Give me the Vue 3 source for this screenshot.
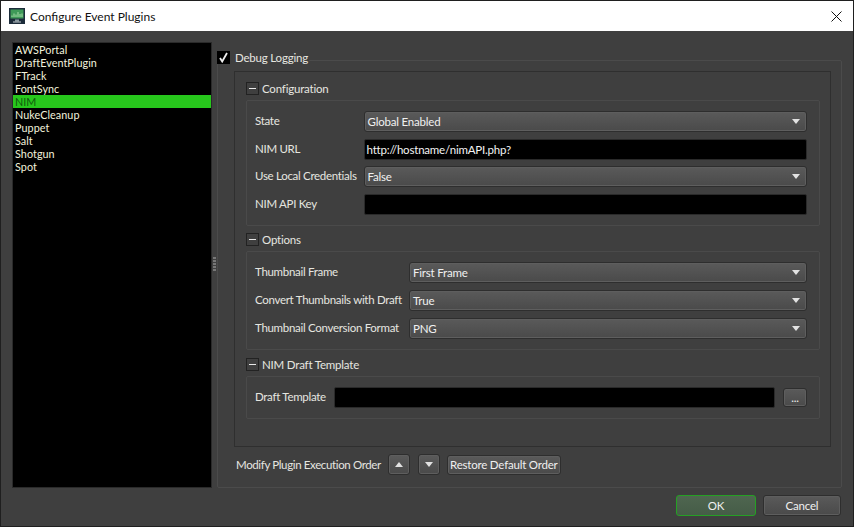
<template>
  <div class="window">
    <header class="titlebar">
      <svg class="app-icon" width="16" height="16" viewBox="0 0 16 16">
        <rect x="0" y="0" width="16" height="16" fill="#1c2c3a" />
        <rect x="1.5" y="1.5" width="13" height="9" fill="#3f9a58" />
        <path d="M3 9V7.5M5 9V5.5M7 9V6.5M9 9V4M11 9V6M13 9V5.5" stroke="#a8dca8" stroke-width="1" />
        <rect x="6" y="11.5" width="4" height="2" fill="#8a9aa0" />
        <rect x="4" y="13.5" width="8" height="1" fill="#c4ccd0" />
      </svg>
      <span class="title">Configure Event Plugins</span>
      <svg class="close" width="11" height="11" viewBox="0 0 11 11">
        <path d="M0.5 0.5L10.5 10.5M10.5 0.5L0.5 10.5" stroke="#111" stroke-width="1" fill="none" />
      </svg>
    </header>

    <main class="content">
      <ul class="plugin-list">
        <li
          v-for="plugin in plugins"
          :key="plugin"
          :class="{ selected: plugin === selected }"
          @click="selected = plugin"
        >
          {{ plugin }}
        </li>
      </ul>

      <div class="splitter"><span v-for="n in 5" :key="n"></span></div>

      <section class="settings">
        <div class="debug-head">
          <span class="checkbox">
            <svg width="11" height="11" viewBox="0 0 11 11">
              <path d="M2 6L4.2 9.5L9 1" stroke="#eee" stroke-width="1.8" fill="none" />
            </svg>
          </span>
          <span class="debug-label">Debug Logging</span>
        </div>

        <div class="outer-group">
          <div class="inner-group">
            <div v-for="group in groups" :key="group.name" class="section">
              <div class="section-head">
                <span class="minus"></span>
                <span>{{ group.name }}</span>
              </div>
              <div class="fields">
                <template v-for="field in group.fields" :key="field.label">
                  <label>{{ field.label }}</label>
                  <div v-if="field.type === 'combo'" class="combo">
                    <span>{{ field.value }}</span>
                    <i class="arrow-down"></i>
                  </div>
                  <div v-else-if="field.type === 'browse'" class="browse-row">
                    <div class="input"></div>
                    <button class="btn browse">...</button>
                  </div>
                  <div v-else class="input">{{ field.value }}</div>
                </template>
              </div>
            </div>
          </div>

          <div class="order-row">
            <span class="order-label">Modify Plugin Execution Order</span>
            <button class="btn square"><i class="arrow-up"></i></button>
            <button class="btn square"><i class="arrow-down"></i></button>
            <button class="btn restore">Restore Default Order</button>
          </div>
        </div>
      </section>
    </main>

    <footer class="footer">
      <button class="btn ok">OK</button>
      <button class="btn cancel">Cancel</button>
    </footer>
  </div>
</template>

<script setup>
import { ref } from "vue";

const plugins = [
  "AWSPortal",
  "DraftEventPlugin",
  "FTrack",
  "FontSync",
  "NIM",
  "NukeCleanup",
  "Puppet",
  "Salt",
  "Shotgun",
  "Spot",
];

const selected = ref("NIM");

const groups = [
  {
    name: "Configuration",
    fields: [
      { label: "State", type: "combo", value: "Global Enabled" },
      { label: "NIM URL", type: "input", value: "http://hostname/nimAPI.php?" },
      { label: "Use Local Credentials", type: "combo", value: "False" },
      { label: "NIM API Key", type: "input", value: "" },
    ],
  },
  {
    name: "Options",
    fields: [
      { label: "Thumbnail Frame", type: "combo", value: "First Frame" },
      { label: "Convert Thumbnails with Draft", type: "combo", value: "True" },
      { label: "Thumbnail Conversion Format", type: "combo", value: "PNG" },
    ],
  },
  {
    name: "NIM Draft Template",
    fields: [{ label: "Draft Template", type: "browse", value: "" }],
  },
];
</script>

<style>
html,
body {
  margin: 0;
  background: #3e3e3e;
}
</style>

<style scoped>
.window {
  width: 854px;
  height: 527px;
  box-sizing: border-box;
  display: flex;
  flex-direction: column;
  background: #3f3f3f;
  border: 1px solid #1f1f1f;
  font-family: Lato, "Open Sans", sans-serif;
  font-size: 11.5px;
  letter-spacing: -0.3px;
  color: #e6e6e0;
}

.titlebar {
  height: 30px;
  flex: none;
  display: flex;
  align-items: center;
  background: #fff;
  color: #111;
  padding: 0 11px 0 8px;
}

.app-icon {
  margin-right: 5px;
}

.title {
  flex: 1;
  font-size: 12px;
  letter-spacing: 0;
}

.content {
  flex: 1;
  display: flex;
  padding: 11px 11px 0 11px;
  min-height: 0;
}

.plugin-list {
  width: 198px;
  height: 444px;
  flex: none;
  margin: 0;
  padding: 0;
  list-style: none;
  background: #000;
  border: 1px solid #2a2a2a;
  color: #f2f2dc;
  font-size: 10.8px;
  letter-spacing: 0.05px;
  line-height: 13px;
}

.plugin-list li {
  height: 13px;
  padding-left: 2px;
}

.plugin-list li.selected {
  background: #27c71c;
  color: #0f5a0c;
}

.splitter {
  width: 5px;
  flex: none;
  display: flex;
  flex-direction: column;
  align-items: center;
  justify-content: center;
  gap: 1px;
  height: 444px;
}

.splitter span {
  width: 3px;
  height: 2px;
  background: #777;
}

.settings {
  flex: 1;
  min-width: 0;
  display: flex;
  flex-direction: column;
  height: 446px;
}

.debug-head {
  height: 14px;
  margin: 8px 0 -4px 0;
  display: flex;
  align-items: center;
  position: relative;
  z-index: 1;
}

.checkbox {
  width: 13px;
  height: 13px;
  background: #000;
  display: flex;
  align-items: center;
  justify-content: center;
}

.debug-label {
  background: #3f3f3f;
  padding: 0 1px 0 5px;
  letter-spacing: -0.2px;
}

.outer-group {
  flex: 1;
  border: 1px solid #4b4b4b;
  border-radius: 2px;
  padding: 10px 10px 0 16px;
  display: flex;
  flex-direction: column;
}

.inner-group {
  height: 376px;
  box-sizing: border-box;
  border: 1px solid #2f2f2f;
  padding: 10px 10px 0 11px;
  display: flex;
  flex-direction: column;
  gap: 7px;
}

.section:last-child {
  margin-top: 1px;
}

.section:last-child .fields {
  column-gap: 8px;
}

.section-head {
  height: 13px;
  display: flex;
  align-items: center;
  gap: 3px;
  margin-bottom: 5px;
  letter-spacing: -0.2px;
}

.minus {
  width: 11px;
  height: 11px;
  border: 1px solid #222;
  position: relative;
  flex: none;
}

.minus::after {
  content: "";
  position: absolute;
  left: 2px;
  right: 2px;
  top: 5px;
  height: 1px;
  background: #e8e8e8;
}

.fields {
  display: grid;
  grid-template-columns: auto 1fr;
  column-gap: 7px;
  row-gap: 7px;
  align-items: center;
  border: 1px solid #4a4a4a;
  border-radius: 2px;
  padding: 10px 12px 10px 8px;
}

.section:first-child .fields {
  row-gap: 6.5px;
}

.fields label {
  margin-top: -2px;
}

.combo {
  height: 21px;
  box-sizing: border-box;
  display: flex;
  align-items: center;
  justify-content: space-between;
  padding: 0 6px 0 3px;
  border: 1px solid #2e2e2e;
  border-radius: 3px;
  background: linear-gradient(#5a5a5a, #4a4a4a);
  box-shadow: inset 0 0 0 1px #5e5e5e;
  color: #f0f0f0;
  letter-spacing: -0.2px;
}

.input {
  flex: 1;
  height: 21px;
  box-sizing: border-box;
  display: flex;
  align-items: center;
  padding: 0 2px;
  background: #000;
  border: 1px solid #2a2a2a;
  border-radius: 2px;
  color: #f4f4f4;
  letter-spacing: -0.2px;
}

.browse-row {
  display: flex;
  align-items: center;
  gap: 8px;
}

.arrow-down,
.arrow-up {
  display: block;
  width: 0;
  height: 0;
  border-left: 4.5px solid transparent;
  border-right: 4.5px solid transparent;
}

.arrow-down {
  border-top: 5px solid #e2e2e2;
}

.arrow-up {
  border-bottom: 5px solid #e2e2e2;
}

.btn {
  box-sizing: border-box;
  font: inherit;
  letter-spacing: -0.2px;
  color: #f0f0f0;
  background: linear-gradient(#5a5a5a, #4a4a4a);
  border: 1px solid #2e2e2e;
  border-radius: 3px;
  box-shadow: inset 0 0 0 1px #5e5e5e;
  padding: 0;
  display: flex;
  align-items: center;
  justify-content: center;
  white-space: nowrap;
}

.browse {
  width: 24px;
  height: 19px;
  flex: none;
}

.order-row {
  display: flex;
  align-items: center;
  margin-top: 7px;
  padding-left: 2px;
}

.order-label {
  margin-right: 7px;
  letter-spacing: -0.37px;
}

.square {
  width: 22px;
  height: 21px;
  margin-right: 8px;
}

.restore {
  width: 114px;
  height: 20px;
  margin-left: -1px;
}

.footer {
  flex: none;
  display: flex;
  justify-content: flex-end;
  gap: 7px;
  padding: 0 12px 10px 0;
}

.ok {
  width: 80px;
  height: 21px;
  border: 1px solid #25a024;
  background: linear-gradient(#4f6650, #455c47);
  box-shadow: none;
}

.cancel {
  width: 78px;
  height: 21px;
}
</style>
